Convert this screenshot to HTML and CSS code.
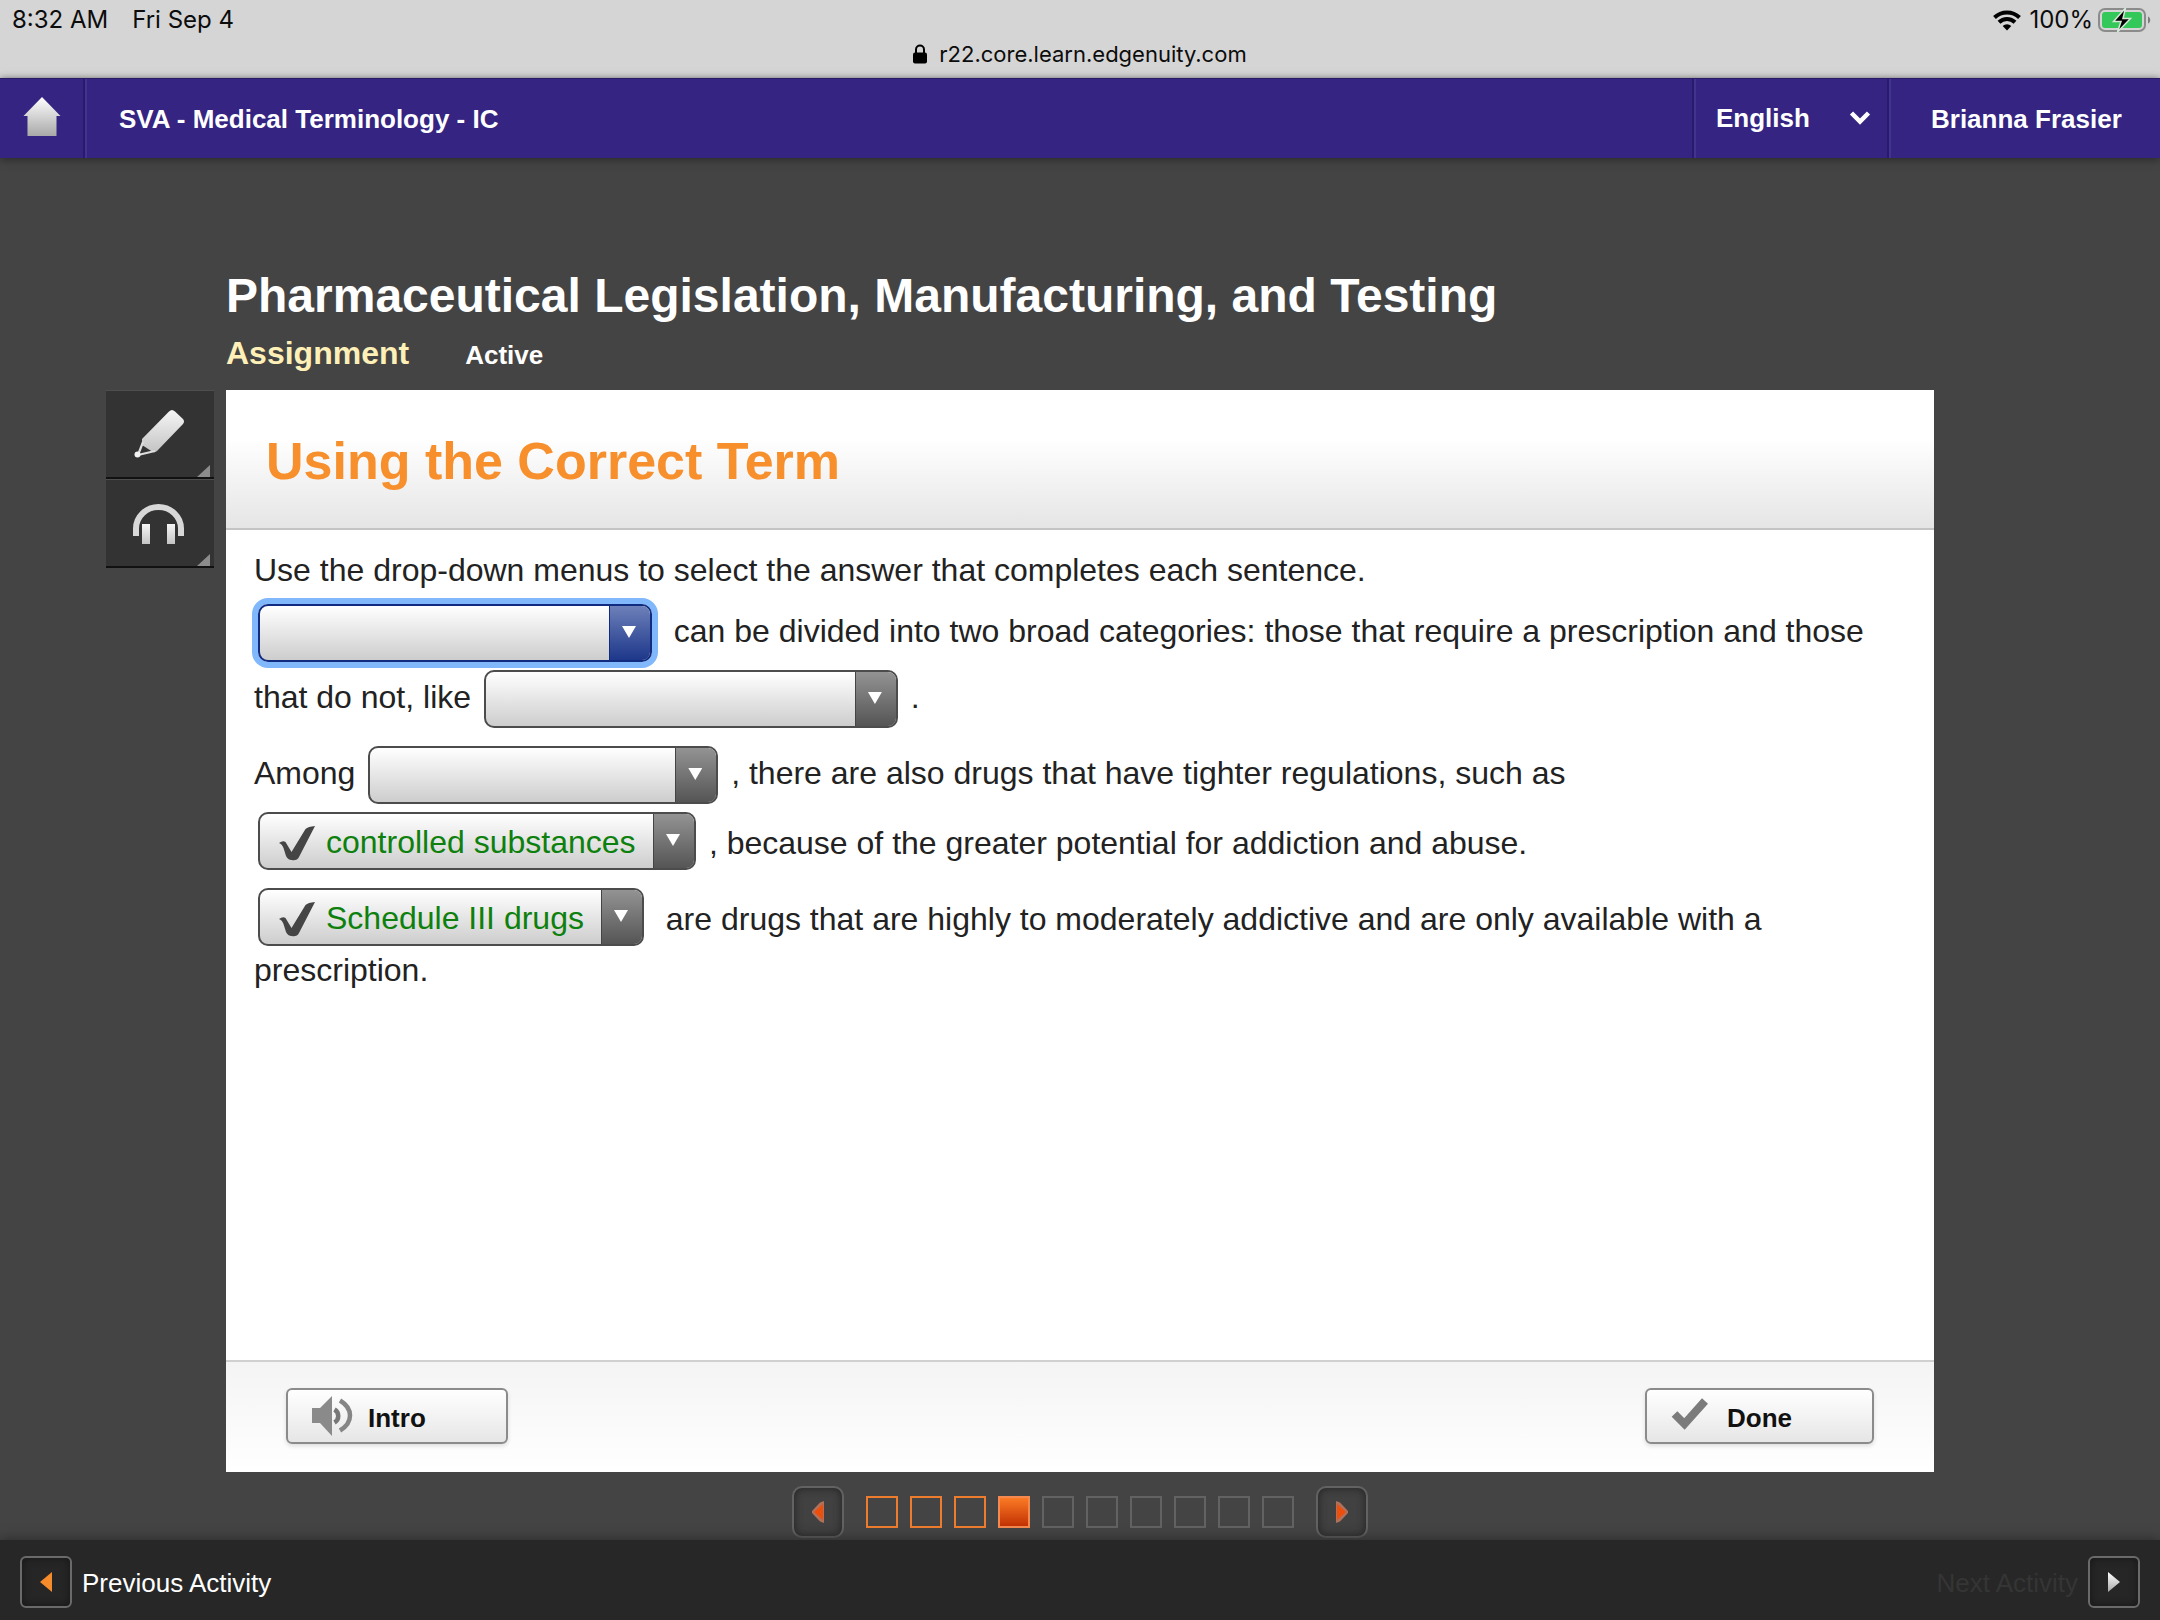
FILE: index.html
```html
<!DOCTYPE html>
<html lang="en">
<head>
<meta charset="utf-8">
<meta name="viewport" content="width=device-width, initial-scale=1">
<title>Pharmaceutical Legislation, Manufacturing, and Testing</title>
<link rel="stylesheet" href="styles.css">
</head>
<body>
<div class="status">
  <div class="status-row">
    <span class="status-time">8:32 AM</span>
    <span class="status-date">Fri Sep 4</span>
    <span class="status-right">
      <svg width="28" height="22" viewBox="0 0 28 22" aria-hidden="true"><g fill="none" stroke="#000" stroke-width="4"><path d="M1.500 8.500a18 18 0 0 1 25 0"/><path d="M6 13.200a11.500 11.500 0 0 1 16 0"/></g><path d="M14 21.500l-4.300-4.400a6.200 6.200 0 0 1 8.600 0z"/></svg>
      <span class="status-pct">100%</span>
      <svg width="54" height="26" viewBox="0 0 54 26" aria-hidden="true"><rect x="1" y="2" width="46" height="22" rx="6" fill="none" stroke="#8b8b8b" stroke-width="2"/><rect x="4" y="5" width="40" height="16" rx="3" fill="#34c759"/><path d="M50 9.500c3 1 3 6 0 7z" fill="#7d7d7d"/><path d="M27.500 1L15.500 14.500h7.500L19.500 25 32.500 11.500h-7.500z" fill="#000" stroke="#d5e9d8" stroke-width="1.500"/></svg>
    </span>
  </div>
  <div class="address">
    <svg width="14" height="20" viewBox="0 0 14 20" aria-hidden="true"><rect x="0" y="8.500" width="14" height="11" rx="2"/><path d="M3 9V5.500a4 4 0 0 1 8 0V9" fill="none" stroke="#000" stroke-width="2"/></svg>
    <span>r22.core.learn.edgenuity.com</span>
  </div>
</div>

<header class="nav">
  <a class="nav-home" href="#" aria-label="Home">
    <svg width="40" height="42" viewBox="0 0 40 42" aria-hidden="true"><defs><linearGradient id="silver" x1="0" y1="0" x2="0" y2="1"><stop offset="0" stop-color="#fff"/><stop offset="1" stop-color="#a8a8a8"/></linearGradient></defs><path d="M20 1L38.500 20H34.500V40H5.500V20H1.500z" fill="url(#silver)"/></svg>
  </a>
  <span class="nav-course">SVA - Medical Terminology - IC</span>
  <button class="nav-lang" type="button">English
    <svg width="22" height="16" viewBox="0 0 22 16" aria-hidden="true"><path d="M2.500 2L11 10.500 19.500 2" fill="none" stroke="#fff" stroke-width="4.500"/></svg>
  </button>
  <a class="nav-user" href="#">Brianna Frasier</a>
</header>

<main class="main">
  <h1 class="title">Pharmaceutical Legislation, Manufacturing, and Testing</h1>
  <div class="meta"><span class="kind">Assignment</span><span class="state">Active</span></div>
  <div class="stage">
    <div class="tools">
      <button class="tool" type="button" aria-label="Highlighter">
        <svg width="108" height="86" viewBox="0 0 108 86" aria-hidden="true"><defs><linearGradient id="pen" x1="0" y1="0" x2="0" y2="1"><stop offset="0" stop-color="#f6f6f6"/><stop offset="1" stop-color="#c4c4c4"/></linearGradient></defs><path d="M36 48L63 20.500Q66 17.500 69 20.500L77 28Q79 30.500 77 33L51 60Q49 62 46 60.500L36 54z" fill="url(#pen)"/><path d="M37 51L32 64 49 60" fill="none" stroke="#ddd" stroke-width="2.200"/><circle cx="31.500" cy="63.500" r="3" fill="#f2f2f2"/><path d="M104 74V86H91z" fill="#8c8c8c"/></svg>
      </button>
      <button class="tool" type="button" aria-label="Read aloud">
        <svg width="108" height="86" viewBox="0 0 108 86" aria-hidden="true"><path d="M30 56V48.500a22.500 21.500 0 0 1 45 0V56" fill="none" stroke="#d8d8d8" stroke-width="6"/><rect x="36" y="44" width="8" height="20" fill="url(#pen)"/><rect x="61" y="44" width="8" height="20" fill="url(#pen)"/><path d="M104 74V86H91z" fill="#8c8c8c"/></svg>
      </button>
    </div>
    <section class="card">
      <h2 class="card-head">Using the Correct Term</h2>
      <div class="card-body">
        <p>Use the drop-down menus to select the answer that completes each sentence.</p>
        <p><span class="pick pick-focus w-394"><select aria-label="Blank 1"><option></option></select></span>&nbsp; can be divided into two broad categories: those that require a prescription and those that do not, like <span class="pick w-414"><select aria-label="Blank 2"><option></option></select></span> .</p>
        <p>Among <span class="pick w-350"><select aria-label="Blank 3"><option></option></select></span> , there are also drugs that have tighter regulations, such as <span class="pick pick-done w-438"><svg class="tick" width="36" height="36" viewBox="0 0 36 36" aria-hidden="true"><path d="M0 17Q4 14 6.500 16L12.500 26 26.500 3Q29 .5 36 0L20 31Q18 35 12.500 34 9 34 7 30L4.500 22Q3 18 0 17z"/></svg><select aria-label="Blank 4"><option>controlled substances</option></select></span> , because of the greater potential for addiction and abuse.</p>
        <p><span class="pick pick-done w-386"><svg class="tick" width="36" height="36" viewBox="0 0 36 36" aria-hidden="true"><path d="M0 17Q4 14 6.500 16L12.500 26 26.500 3Q29 .5 36 0L20 31Q18 35 12.500 34 9 34 7 30L4.500 22Q3 18 0 17z"/></svg><select aria-label="Blank 5"><option>Schedule III drugs</option></select></span>&nbsp; are drugs that are highly to moderately addictive and are only available with a prescription.</p>
      </div>
      <div class="card-foot">
        <button class="btn btn-intro" type="button">
          <svg width="42" height="42" viewBox="0 0 42 42" aria-hidden="true"><path d="M0 13H8L20 1V41L8 28H0z" fill="#8a8a8a"/><path d="M22.500 14.500a7.500 7.500 0 0 1 0 13" fill="none" stroke="#777" stroke-width="4.500"/><path d="M28 5.500q10 6 10 15t-10 15" fill="none" stroke="#858585" stroke-width="4.500"/></svg>
          Intro
        </button>
        <button class="btn btn-done" type="button">
          <svg width="38" height="42" viewBox="0 0 38 42" aria-hidden="true"><path d="M3.500 19L13.500 29 34 6" fill="none" stroke="#7b7b7b" stroke-width="8"/></svg>
          Done
        </button>
      </div>
    </section>
  </div>
  <nav class="pager" aria-label="Questions">
    <button class="arrow" type="button" aria-label="Previous question"><svg width="16" height="24" viewBox="0 0 16 24" aria-hidden="true"><path d="M14 1V23L10 21.500 2 13V11L10 2.500z" fill="#b0705a"/><path d="M13 4V20L4 12z" fill="#ee4e0c"/></svg></button>
    <div class="steps">
      <a class="step step-seen" href="#" aria-label="1"></a><a class="step step-seen" href="#" aria-label="2"></a><a class="step step-seen" href="#" aria-label="3"></a><a class="step step-now" href="#" aria-label="4"></a><a class="step" href="#" aria-label="5"></a><a class="step" href="#" aria-label="6"></a><a class="step" href="#" aria-label="7"></a><a class="step" href="#" aria-label="8"></a><a class="step" href="#" aria-label="9"></a><a class="step" href="#" aria-label="10"></a>
    </div>
    <button class="arrow" type="button" aria-label="Next question"><svg width="16" height="24" viewBox="0 0 16 24" aria-hidden="true"><path d="M2 1V23L6 21.500 14 13V11L6 2.500z" fill="#b0705a"/><path d="M3 4V20L12 12z" fill="#ee4e0c"/></svg></button>
  </nav>
</main>

<footer class="bar">
  <a class="activity" href="#"><span class="arrow arrow-bar"><svg width="14" height="22" viewBox="0 0 14 22" aria-hidden="true"><path d="M13 1V21L1 11z" fill="#f68b2c"/></svg></span><span class="activity-name">Previous Activity</span></a>
  <a class="activity activity-off" href="#"><span class="activity-name">Next Activity</span><span class="arrow arrow-bar"><svg width="14" height="22" viewBox="0 0 14 22" aria-hidden="true"><path d="M1 1V21L13 11z" fill="url(#silver)"/></svg></span></a>
</footer>
</body>
</html>
```
FILE: styles.css
```css
* { box-sizing: border-box; }
body {
  margin: 0;
  min-height: 100vh;
  display: flex;
  flex-direction: column;
  background: #444;
  color: #fff;
  font-family: "Liberation Sans", Arial, sans-serif;
}
button, select { font: inherit; color: inherit; margin: 0; }
a { color: inherit; text-decoration: none; }
svg { display: block; flex: none; }

/* device status bar */
.status {
  height: 78px;
  background: #d5d5d5;
  color: #0c0c0c;
  font: 24px/40px Inter, sans-serif;
}
.status-row { display: flex; height: 40px; padding: 0 8px 0 12px; }
.status-date { margin-left: 24px; }
.status-right { margin-left: auto; display: flex; align-items: center; }
.status-pct { margin: 0 5px 0 8px; }
.address { display: flex; justify-content: center; align-items: center; gap: 12px; font-size: 22px; line-height: 28px; }

/* course bar */
.nav {
  position: relative;
  display: flex;
  height: 80px;
  background: #352481;
  border-top: 1px solid #281a66;
  box-shadow: 0 2px 8px #2a2a2a;
  font-size: 26px;
  font-weight: bold;
}
.nav > * { display: flex; align-items: center; padding-top: 2px; }
.nav > .nav-home { width: 85px; padding: 0 0 4px 22px; border-right: 2px solid #291a6b; }
.nav-course { flex: 1; padding-left: 32px; border-left: 2px solid #433390; }
.nav-lang {
  width: 195px;
  justify-content: space-between;
  padding: 0 16px 0 20px;
  background: none;
  border: 0;
  border-left: 2px solid #433390;
  border-right: 2px solid #291a6b;
  box-shadow: -2px 0 #291a6b;
}
.nav-user { width: 271px; padding-left: 40px; border-left: 2px solid #433390; }

/* lesson */
.main { flex: 1; display: flex; flex-direction: column; padding: 108px 226px 2px 106px; }
.title { margin: 0 0 0 120px; font-size: 48px; line-height: 60px; }
.meta { display: flex; align-items: baseline; gap: 56px; margin: 6px 0 14px 120px; line-height: 42px; font-weight: bold; }
.kind { color: #fff0b8; font-size: 32px; }
.state { font-size: 26px; }
.stage { flex: 1; display: flex; gap: 12px; }
.tools { width: 108px; }
.tool {
  display: block;
  width: 100%;
  padding: 0;
  border: 0;
  border-top: 1px solid #4e4e4e;
  border-bottom: 2px solid #111;
  background: #333;
}
.card { flex: 1; display: flex; flex-direction: column; background: #fff; color: #222; }
.card-head {
  margin: 0;
  height: 140px;
  padding-left: 40px;
  border-bottom: 2px solid #c4c4c4;
  background: linear-gradient(#fff 35%, #e5e5e5);
  color: #f68f2c;
  font-size: 52px;
  line-height: 142px;
}
.card-body { flex: 1; padding: 20px 28px; font-size: 32px; line-height: 40px; }
.card-body p { margin: 0 0 10px; }

/* inline drop-downs */
.pick {
  position: relative;
  display: inline-block;
  overflow: hidden;
  height: 58px;
  margin: 4px;
  vertical-align: -24px;
  border: 2px solid #4c4c4c;
  border-radius: 10px;
  background: linear-gradient(#fff, #cdcdcd);
}
.pick select {
  appearance: none;
  display: block;
  width: 100%;
  height: 54px;
  padding: 2px 0 0 66px;
  border: 0;
  outline: 0;
  background: none;
  color: #0d800d;
}
.pick::before {
  content: "";
  position: absolute;
  inset: 0 0 0 auto;
  width: 40px;
  border-left: 1px solid #444;
  background: linear-gradient(#939393, #555);
}
.pick::after {
  content: "";
  position: absolute;
  top: 20px;
  right: 14px;
  width: 14px;
  height: 12px;
  background: #fff;
  clip-path: polygon(0 0, 100% 0, 50% 100%);
}
.pick-done { vertical-align: -20px; }
.pick-focus { border-color: #102b80; box-shadow: 0 0 0 6px #80b8fb; }
.pick-focus::before { border-color: #102b80; background: linear-gradient(#6d80b9, #1d378a); }
.tick { position: absolute; top: 12px; left: 19px; fill: #454545; }
.w-350 { width: 350px; }
.w-386 { width: 386px; }
.w-394 { width: 394px; }
.w-414 { width: 414px; }
.w-438 { width: 438px; }

.card-foot {
  display: flex;
  justify-content: space-between;
  height: 112px;
  padding: 26px 60px 0;
  border-top: 2px solid #d0d0d0;
  background: linear-gradient(#f4f4f4, #fff);
}
.btn {
  display: flex;
  align-items: center;
  height: 56px;
  padding: 4px 0 0 24px;
  border: 2px solid #8b8b8b;
  border-radius: 6px;
  background: linear-gradient(#fff, #e6e6e6);
  box-shadow: 0 2px 4px #ddd;
  color: #111;
  font-size: 26px;
  font-weight: bold;
  line-height: 48px;
}
.btn svg { margin-bottom: 4px; }
.btn-intro { width: 222px; gap: 14px; }
.btn-done { width: 229px; gap: 18px; }

/* question pager */
.pager { display: flex; justify-content: center; align-items: center; gap: 22px; margin: 14px 0 0 120px; }
.arrow {
  display: flex;
  align-items: center;
  justify-content: center;
  width: 52px;
  height: 52px;
  padding: 0;
  border: 2px solid #626262;
  border-radius: 10px;
  background: #414141;
  box-shadow: inset 0 0 8px #222;
}
.arrow-bar { border-color: #6a6a6a; border-radius: 6px; background: #262626; box-shadow: inset 0 0 8px #161616; }
.steps { display: flex; gap: 12px; }
.step { width: 32px; height: 32px; border: 2px solid #626262; }
.step-seen { border-color: #ee7c2f; }
.step-now { border-color: #f58a50; background: linear-gradient(#fb7a24, #c23204); }

/* activity bar */
.bar {
  display: flex;
  justify-content: space-between;
  height: 80px;
  padding: 16px 20px 0;
  background: #272727;
  box-shadow: 0 -2px 10px #303030;
  font-size: 26px;
}
.activity { display: flex; align-items: center; gap: 10px; height: 52px; }
.activity-name { padding-top: 2px; }
.activity-off { color: #353535; }
```
